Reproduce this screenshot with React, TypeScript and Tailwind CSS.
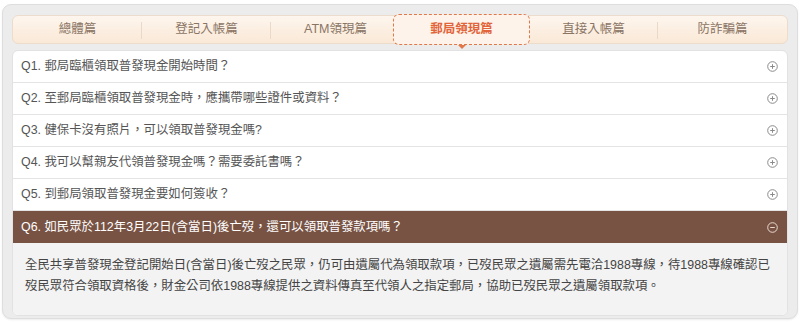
const tabs = ["總體篇", "登記入帳篇", "ATM領現篇", "郵局領現篇", "直接入帳篇", "防詐騙篇"];
const active = 3;

const questions = [
  "郵局臨櫃領取普發現金開始時間？",
  "至郵局臨櫃領取普發現金時，應攜帶哪些證件或資料？",
  "健保卡沒有照片，可以領取普發現金嗎?",
  "我可以幫親友代領普發現金嗎？需要委託書嗎？",
  "到郵局領取普發現金要如何簽收？",
  "如民眾於112年3月22日(含當日)後亡歿，還可以領取普發款項嗎？",
];

function CircleIcon({ open }: { open: boolean }) {
  return (
    <svg width="11" height="11" viewBox="0 0 11 11" fill="none" stroke="currentColor" strokeWidth="1">
      <circle cx="5.5" cy="5.5" r="4.8" />
      <path d="M3.2 5.5h4.6" />
      {!open && <path d="M5.5 3.2v4.6" />}
    </svg>
  );
}

export default function App() {
  return (
    <div
      className="h-[324px] w-[800px] bg-white px-[2px] pt-[4px]"
      style={{ fontFamily: '"Liberation Sans", "Noto Sans CJK TC", sans-serif' }}
    >
      <div className="h-[315px] rounded-[9px] border border-[#dedede] bg-[#ececec] px-[9px] pt-[10px] shadow-[0_1px_2px_rgba(0,0,0,0.08)]">
        {/* tab bar */}
        <div className="flex h-[29px] rounded-[6px] border border-[#ecdccb] bg-gradient-to-b from-[#fdf6ee] to-[#fae8d6]">
          {tabs.map((t, i) => (
            <div key={t} className="relative flex flex-1 items-center justify-center">
              {i === active ? (
                <div className="relative -my-[2px] -ml-[7px] -mr-[1px] flex h-[31px] w-[calc(100%+8px)] shrink-0 items-center justify-center rounded-[6px] border border-dashed border-[#e0784a] bg-[#fdf3ea] text-[12.5px] font-bold text-[#e2643a]">
                  {t}
                  <span className="absolute -bottom-[5px] left-1/2 h-0 w-0 -translate-x-1/2 border-x-[4px] border-t-[4px] border-x-transparent border-t-[#e0784a]" />
                </div>
              ) : (
                <span className="text-[12.5px] text-[#8a7565]">{t}</span>
              )}
              {i < tabs.length - 1 && i !== active - 1 && i !== active && (
                <span className="absolute right-0 top-[6px] h-[17px] w-px bg-[#ead9c8]" />
              )}
            </div>
          ))}
        </div>

        {/* accordion */}
        <div className="mt-[6px] overflow-hidden rounded-[6px] border border-[#e2e2e2] bg-white">
          {questions.map((q, i) => {
            const open = i === questions.length - 1;
            return (
              <div key={i}>
                <div
                  className={
                    open
                      ? "flex h-[32px] items-center justify-between bg-[#785344] pl-[8px] pr-[9px] text-[12.4px] text-white"
                      : "flex h-[32px] items-center justify-between border-b border-[#e4e4e4] pl-[8px] pr-[9px] text-[12.4px] text-[#555]"
                  }
                >
                  <span>
                    Q{i + 1}. {q}
                  </span>
                  <span className={open ? "text-[#e9d8d0]" : "text-[#8a8a8a]"}>
                    <CircleIcon open={open} />
                  </span>
                </div>
                {open && (
                  <div className="bg-[#f3f3f3] pb-[18px] pl-[12px] pr-[10px] pt-[12px] text-[12.4px] leading-[21px] text-[#444]">
                    全民共享普發現金登記開始日(含當日)後亡歿之民眾，仍可由遺屬代為領取款項，已歿民眾之遺屬需先電洽1988專線，待1988專線確認已歿民眾符合領取資格後，財金公司依1988專線提供之資料傳真至代領人之指定郵局，協助已歿民眾之遺屬領取款項。
                  </div>
                )}
              </div>
            );
          })}
        </div>
      </div>
    </div>
  );
}
